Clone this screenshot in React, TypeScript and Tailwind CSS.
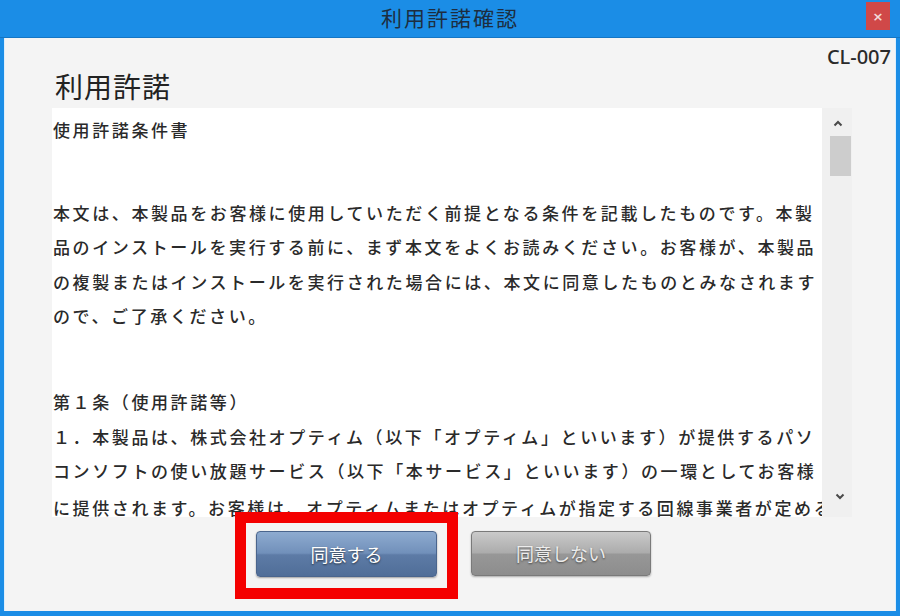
import React from "react";

const JP = "font-['Noto_Sans_CJK_JP','Noto_Sans',sans-serif]";

// 規約本文: 1行ずつ固定 (39文字/行)
const PARAGRAPHS: string[][] = [
  ["使用許諾条件書"],
  [
    "本文は、本製品をお客様に使用していただく前提となる条件を記載したものです。本製",
    "品のインストールを実行する前に、まず本文をよくお読みください。お客様が、本製品",
    "の複製またはインストールを実行された場合には、本文に同意したものとみなされます",
    "ので、ご了承ください。",
  ],
  [
    "第１条（使用許諾等）",
    "１．本製品は、株式会社オプティム（以下「オプティム」といいます）が提供するパソ",
    "コンソフトの使い放題サービス（以下「本サービス」といいます）の一環としてお客様",
    "に提供されます。お客様は、オプティムまたはオプティムが指定する回線事業者が定める場合に基づ",
  ],
];

function Chevron({ up }: { up?: boolean }) {
  return (
    <svg width="10" height="7" viewBox="0 0 10 7" className="block">
      <path
        d={up ? "M1.5 5.5 L5 2 L8.5 5.5" : "M1.5 1.5 L5 5 L8.5 1.5"}
        fill="none"
        stroke="#4a4a4a"
        strokeWidth="2"
      />
    </svg>
  );
}

function LicenseBox() {
  return (
    <div className="ml-[47px] mt-[4px] flex h-[409px] w-[800px]">
      {/* text area */}
      <div className={`h-full w-[770px] overflow-hidden whitespace-nowrap bg-white pl-[1px] pt-[5px] text-[17px] font-medium leading-[34.6px] tracking-[2.6px] text-[#2a2a2a] ${JP}`}>
        {PARAGRAPHS.map((lines, i) => (
          <div key={i} className={i === 1 ? "mt-[48px]" : i === 2 ? "mt-[51px]" : ""}>
            {lines.map((l, j) => (
              <div key={j} className={i === 2 && j === 3 ? "mt-[2px]" : ""}>
                {l}
              </div>
            ))}
          </div>
        ))}
      </div>
      {/* scrollbar */}
      <div className="flex h-full w-[30px] flex-col bg-[#f0f0f0]">
        <div className="flex h-[28px] items-center justify-center pl-[2px] pt-[2px]">
          <Chevron up />
        </div>
        <div className="ml-[8px] h-[40px] w-[21px] bg-[#cdcdcd]" />
        <div className="flex-1" />
        <div className="flex h-[28px] items-center justify-center pb-[14px] pl-[6px]">
          <Chevron />
        </div>
      </div>
    </div>
  );
}

export default function App() {
  return (
    <div className="relative flex h-[616px] w-[900px] flex-col bg-[#1b8de6]">
      {/* title bar */}
      <div className="relative flex h-[38px] items-center justify-center border-b border-[#1576c4]">
        <span className={`-mt-[2px] text-[21px] leading-none tracking-[2px] text-[#1d2d40] ${JP}`}>
          利用許諾確認
        </span>
        <div className="absolute right-[10px] top-[2px] flex h-[28px] w-[24px] items-center justify-center bg-[#d04848] text-[13px] font-bold leading-none text-[#f3dada] font-['DejaVu_Sans',sans-serif]">
          ×
        </div>
      </div>

      {/* body panel */}
      <div className="relative mx-[4px] mb-[5px] flex-1 border-l border-r border-[#dceefc] bg-[#f4f4f4]">
        <div className="h-[30px] pr-[4px] pt-[8px] text-right text-[20px] font-medium leading-[22px] text-[#2a2a2a] font-['Noto_Sans',sans-serif]">
          CL-007
        </div>
        <h1 className={`h-[36px] pl-[50px] text-[28px] leading-[36px] tracking-[1px] text-[#222] ${JP}`}>
          利用許諾
        </h1>

        <LicenseBox />

        {/* buttons */}
        <div className={`mt-[14px] flex gap-[34px] pl-[251px] ${JP}`}>
          <button className="h-[46px] w-[181px] rounded-[4px] border border-[#4a658d] bg-[linear-gradient(to_bottom,#8eabd0_0%,#7190ba_48%,#5d7ba6_52%,#506e98_100%)] text-[18px] text-white shadow-[0_1px_2px_rgba(0,0,0,0.35)] [text-shadow:0_1px_2px_rgba(0,0,0,0.6)]">
            同意する
          </button>
          <button className="h-[45px] w-[180px] rounded-[4px] border border-[#7a7a7a] bg-[linear-gradient(to_bottom,#cacaca_0%,#acacac_48%,#979797_52%,#8d8d8d_100%)] text-[18px] text-[#ececec] shadow-[0_1px_2px_rgba(0,0,0,0.3)] [text-shadow:0_1px_2px_rgba(0,0,0,0.55)]">
            同意しない
          </button>
        </div>

        {/* annotation box */}
        <div className="absolute left-[230px] top-[474px] h-[87px] w-[223px] border-[11px] border-[#f40000]" />
      </div>
    </div>
  );
}
